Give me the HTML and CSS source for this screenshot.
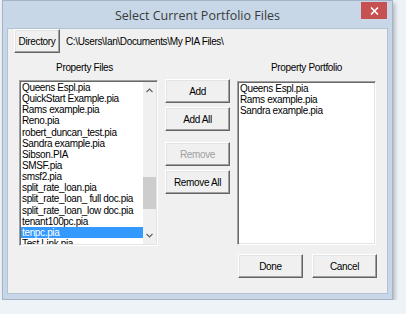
FILE: index.html
```html
<!DOCTYPE html>
<html lang="en">
<head>
  <meta charset="UTF-8">
  <title>Select Current Portfolio Files</title>
  <link rel="stylesheet" href="styles.css">
</head>
<body>
  <div class="window">
    <div class="titlebar">
      <span></span>
      <div class="title">Select Current Portfolio Files</div>
      <div class="close">
        <svg width="9" height="8" viewBox="0 0 9 8"><path d="M1 0.5 L8 7.5 M8 0.5 L1 7.5" stroke="#fff" stroke-width="1.6"/></svg>
      </div>
    </div>

    <div class="client">
      <div class="dir-row">
        <button class="btn dir">Directory</button>
        <span class="path">C:\Users\Ian\Documents\My PIA Files\</span>
      </div>

      <div class="lists">
        <div class="label label-files">Property Files</div>
        <div></div>
        <div class="label">Property Portfolio</div>

        <div class="listbox files">
          <ul class="items">
            <li>Queens Espl.pia</li>
            <li>QuickStart Example.pia</li>
            <li>Rams example.pia</li>
            <li>Reno.pia</li>
            <li>robert_duncan_test.pia</li>
            <li>Sandra example.pia</li>
            <li>Sibson.PIA</li>
            <li>SMSF.pia</li>
            <li>smsf2.pia</li>
            <li>split_rate_loan.pia</li>
            <li>split_rate_loan_ full doc.pia</li>
            <li>split_rate_loan_low doc.pia</li>
            <li>tenant100pc.pia</li>
            <li class="selected">tenpc.pia</li>
            <li>Test Link.pia</li>
          </ul>
          <div class="scrollbar">
            <div class="arrow">
              <svg width="7" height="5" viewBox="0 0 7 5"><path d="M0.5 4 L3.5 1 L6.5 4" fill="none" stroke="#606060" stroke-width="1.2"/></svg>
            </div>
            <div class="track"><div class="thumb"></div></div>
            <div class="arrow">
              <svg width="7" height="5" viewBox="0 0 7 5"><path d="M0.5 1 L3.5 4 L6.5 1" fill="none" stroke="#606060" stroke-width="1.2"/></svg>
            </div>
          </div>
        </div>

        <div class="actions">
          <button class="btn">Add</button>
          <button class="btn">Add All</button>
          <button class="btn disabled gap">Remove</button>
          <button class="btn">Remove All</button>
        </div>

        <div class="listbox portfolio">
          <ul class="items">
            <li>Queens Espl.pia</li>
            <li>Rams example.pia</li>
            <li>Sandra example.pia</li>
          </ul>
        </div>
      </div>

      <div class="footer">
        <button class="btn">Done</button>
        <button class="btn">Cancel</button>
      </div>
    </div>
  </div>
</body>
</html>
```

FILE: styles.css
```css
body {
  margin: 0;
  background-color: #eef3f8;
  font-family: "Liberation Sans", Arial, sans-serif;
  font-size: 10px;
  letter-spacing: -0.35px;
  color: #000;
}

.window {
  box-sizing: border-box;
  width: 391px;
  height: 300px;
  margin-left: 2px;
  background-color: #c7d7e7;
  border: 1px solid #a3b4c6;
  box-shadow: 2px 3px 4px rgba(0, 0, 0, 0.25);
  display: flex;
  flex-direction: column;
  padding: 0 5px 6px 5px;
}

.titlebar {
  height: 28px;
  display: grid;
  grid-template-columns: 1fr auto 1fr;
  align-items: center;
}

.title {
  font-family: "Open Sans", sans-serif;
  font-size: 12.5px;
  letter-spacing: 0;
  color: #3a3a3a;
  padding-top: 1px;
}

.close {
  justify-self: end;
  align-self: start;
  margin-top: 1px;
  margin-right: 0px;
  width: 26px;
  height: 17px;
  background-color: #c75050;
  display: flex;
  align-items: center;
  justify-content: center;
}

.client {
  flex: 1;
  background-color: #f0f0f0;
  box-shadow: 0 0 0 1px #b4c3d3;
  display: flex;
  flex-direction: column;
}

.btn {
  box-sizing: border-box;
  height: 24px;
  padding: 0;
  font-family: "Liberation Sans", Arial, sans-serif;
  font-size: 10px;
  letter-spacing: -0.35px;
  color: #000;
  background-color: #f0f0f0;
  border-top: 1px solid #ffffff;
  border-left: 1px solid #ffffff;
  border-right: 1px solid #646464;
  border-bottom: 1px solid #646464;
  box-shadow: inset -1px -1px 0 #a0a0a0, inset 1px 1px 0 #e3e3e3;
}

.btn.disabled {
  color: #a0a0a0;
}

.dir-row {
  display: flex;
  align-items: center;
  padding-left: 6px;
  margin-top: 0;
}

.dir {
  width: 46px;
}

.path {
  margin-left: 6px;
}

.lists {
  display: grid;
  grid-template-columns: 139px 65px 139px;
  grid-template-rows: 12px auto;
  column-gap: 7px;
  row-gap: 5px;
  margin-top: 9px;
  padding-left: 11px;
  align-items: start;
}

.label {
  text-align: center;
  line-height: 12px;
}

.label-files {
  padding-right: 8px;
}

.listbox {
  box-sizing: border-box;
  background-color: #fff;
  border-top: 1px solid #a0a0a0;
  border-left: 1px solid #a0a0a0;
  border-right: 1px solid #fff;
  border-bottom: 1px solid #fff;
  box-shadow: inset 1px 1px 0 #696969, inset -1px -1px 0 #e3e3e3;
  padding: 1px;
  overflow: hidden;
}

.files {
  height: 166px;
  margin-top: 1px;
  display: flex;
}

.portfolio {
  height: 164px;
  margin-top: 2px;
}

.items {
  list-style: none;
  margin: 0;
  padding: 0;
  flex: 1;
  overflow: hidden;
}

.items li {
  line-height: 11.15px;
  height: 11.15px;
  padding-left: 1px;
  white-space: nowrap;
}

.items li.selected {
  background-color: #3399ff;
  color: #fff;
}

.scrollbar {
  width: 13px;
  background-color: #f0f0f0;
  display: flex;
  flex-direction: column;
}

.arrow {
  height: 17px;
  display: flex;
  align-items: center;
  justify-content: center;
}

.track {
  flex: 1;
}

.thumb {
  margin-top: 78px;
  height: 32px;
  background-color: #cdcdcd;
}

.actions {
  display: flex;
  flex-direction: column;
  gap: 4px;
}

.actions .btn {
  width: 65px;
}

.actions .gap {
  margin-top: 7px;
}

.footer {
  display: flex;
  justify-content: flex-end;
  gap: 9px;
  margin-top: 8px;
  padding-right: 10px;
}

.footer .btn {
  width: 65px;
}
```
